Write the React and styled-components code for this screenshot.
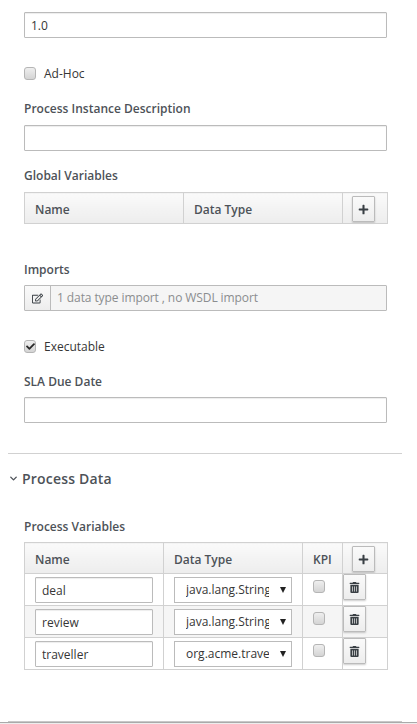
import React from 'react';
import styled, { createGlobalStyle } from 'styled-components';
import { FaPlus, FaTrashAlt, FaRegEdit, FaCheck } from 'react-icons/fa';
import { FiChevronDown } from 'react-icons/fi';

const GlobalStyle = createGlobalStyle`
  html, body {
    margin: 0;
    padding: 0;
    height: 100%;
    overflow: hidden;
    background: #fff;
  }
  body {
    font-family: "Open Sans", "Liberation Sans", sans-serif;
    font-size: 12px;
    color: #363636;
  }
`;

const Page = styled.div`
  height: 724px;
  overflow: hidden;
  display: flex;
  flex-direction: column;
  box-sizing: border-box;
  padding: 0 15px 0 8px;
`;

const Section = styled.div`
  padding: 0 15px 0 16px;
`;

const Label = styled.div`
  font-weight: 600;
  font-size: 12px;
  line-height: 16px;
  margin-top: ${p => p.$top || 0}px;
  margin-bottom: ${p => p.$bottom || 8}px;
  color: #4d5258;
`;

const TextInput = styled.input`
  display: block;
  box-sizing: border-box;
  width: 100%;
  height: 26px;
  border: 1px solid #bbb;
  border-radius: 1px;
  padding: 2px 6px;
  font: 12px "Open Sans", sans-serif;
  color: #363636;
  background: #fff;
  box-shadow: inset 0 1px 1px rgba(3, 3, 3, 0.075);
  outline: none;
`;

const CheckRow = styled.div`
  display: flex;
  align-items: center;
  gap: 8px;
  height: 16px;
  margin-top: ${p => p.$top}px;
`;

const CheckBox = styled.span`
  box-sizing: border-box;
  display: inline-flex;
  align-items: center;
  justify-content: center;
  width: 12px;
  height: 13px;
  border: 1px solid #b5b5b5;
  border-radius: 3px;
  background: linear-gradient(#efefef, #d4d4d4);
  color: #2a2a2a;
  font-size: 9px;
`;

const Table = styled.table`
  width: 363px;
  table-layout: fixed;
  border-collapse: collapse;
  font-size: 12px;
  color: #363636;

  th, td {
    border: 1px solid #d1d1d1;
    padding: 0;
  }

  th {
    height: 31px;
    text-align: left;
    font-weight: 600;
    padding-left: 10px;
    padding-top: 3px;
    box-sizing: border-box;
    background: linear-gradient(#fafafa, #ededed);
    color: #4d5258;
  }
`;

const ButtonHead = styled.th`
  && {
    padding: 0 0 0 9px;
    vertical-align: top;
  }
`;

const IconButton = styled.div`
  box-sizing: border-box;
  width: 23px;
  height: 26px;
  display: flex;
  align-items: center;
  justify-content: center;
  border: 1px solid #bbb;
  border-radius: 1px;
  background: linear-gradient(#fafafa, #ededed);
  box-shadow: 0 1px 2px rgba(0, 0, 0, 0.2);
  color: #393f44;
  font-size: 11px;
  margin-top: ${p => p.$top || 0}px;
`;

const Row = styled.tr`
  background: ${p => (p.$striped ? '#f5f5f5' : '#fff')};
`;

const CellInner = styled.div`
  height: 31px;
  box-sizing: border-box;
  padding: 3px 10px 0;
`;

const CheckCell = styled.div`
  height: 31px;
  box-sizing: border-box;
  padding: 6px 0 0 10px;
`;

const ButtonCell = styled.td`
  && {
    vertical-align: top;
  }
`;

const ButtonCellInner = styled.div`
  height: 31px;
`;

const SelectBox = styled.div`
  box-sizing: border-box;
  position: relative;
  width: 118px;
  height: 26px;
  border: 1px solid #bbb;
  background: #fff;
  padding: 3px 22px 0 11px;
  line-height: 18px;
  overflow: hidden;
  white-space: nowrap;

  &::after {
    content: '';
    position: absolute;
    right: 5px;
    top: 9px;
    border-style: solid;
    border-width: 6px 3px 0;
    border-color: #222 transparent transparent;
  }
`;

const SelectText = styled.div`
  overflow: hidden;
  color: #363636;
`;

const InputGroup = styled.div`
  display: flex;
  box-sizing: border-box;
  height: 26px;
  border: 1px solid #bbb;
  border-radius: 1px;
  background: #f5f5f5;
  color: #8b8d8f;
`;

const GroupAddon = styled.div`
  width: 25px;
  display: flex;
  align-items: center;
  justify-content: center;
  border-right: 1px solid #bbb;
  background: linear-gradient(#fafafa, #ededed);
  color: #393f44;
  font-size: 11px;
`;

const GroupText = styled.div`
  padding-left: 6px;
  line-height: 24px;
  letter-spacing: -0.09px;
`;

const Divider = styled.div`
  height: 1px;
  background: #d1d1d1;
  width: 394px;
  margin-top: 30px;
`;

const SectionTitle = styled.div`
  display: flex;
  align-items: center;
  gap: 3px;
  height: 20px;
  margin-top: 14px;
  font-size: 14px;
  font-weight: 600;
  letter-spacing: 0.2px;
  color: #4d5258;
`;

const BottomLine = styled.div`
  position: fixed;
  left: 0;
  right: 0;
  bottom: 0;
  height: 1px;
  border-top: 1px solid #aaa;
  background: #ededed;

  &::before {
    content: '';
    position: absolute;
    left: 8px;
    width: 394px;
    top: -2px;
    height: 1px;
    background: #c8c8c8;
  }
`;

const variables = [
  { name: 'deal', type: 'java.lang.String' },
  { name: 'review', type: 'java.lang.String', striped: true },
  { name: 'traveller', type: 'org.acme.travels.Traveller' },
];

export default function App() {
  return (
    <>
      <GlobalStyle />
      <Page>
        <Section>
          <Label $top={-12}>Version</Label>
          <TextInput defaultValue="1.0" />
          <CheckRow $top={27}>
            <CheckBox />
            Ad-Hoc
          </CheckRow>
          <Label $top={20}>Process Instance Description</Label>
          <TextInput />
          <Label $top={17}>Global Variables</Label>
          <Table>
            <colgroup>
              <col style={{ width: 159 }} />
              <col style={{ width: 159 }} />
              <col style={{ width: 45 }} />
            </colgroup>
            <thead>
              <tr>
                <th>Name</th>
                <th>Data Type</th>
                <ButtonHead>
                  <IconButton $top={3}><FaPlus /></IconButton>
                </ButtonHead>
              </tr>
            </thead>
          </Table>
          <Label $top={38} $bottom={7}>Imports</Label>
          <InputGroup>
            <GroupAddon><FaRegEdit /></GroupAddon>
            <GroupText>1 data type import , no WSDL import</GroupText>
          </InputGroup>
          <CheckRow $top={27}>
            <CheckBox><FaCheck /></CheckBox>
            Executable
          </CheckRow>
          <Label $top={20} $bottom={7}>SLA Due Date</Label>
          <TextInput />
        </Section>
        <Divider />
        <SectionTitle>
          <FiChevronDown size={11} strokeWidth={3} />
          Process Data
        </SectionTitle>
        <Section>
          <Label $top={31} $bottom={7}>Process Variables</Label>
          <Table>
            <colgroup>
              <col style={{ width: 139 }} />
              <col style={{ width: 139 }} />
              <col style={{ width: 40 }} />
              <col style={{ width: 45 }} />
            </colgroup>
            <thead>
              <tr>
                <th>Name</th>
                <th>Data Type</th>
                <th>KPI</th>
                <ButtonHead>
                  <IconButton $top={3}><FaPlus /></IconButton>
                </ButtonHead>
              </tr>
            </thead>
            <tbody>
              {variables.map(v => (
                <Row key={v.name} $striped={v.striped}>
                  <td>
                    <CellInner>
                      <TextInput defaultValue={v.name} />
                    </CellInner>
                  </td>
                  <td>
                    <CellInner>
                      <SelectBox>
                        <SelectText>{v.type}</SelectText>
                      </SelectBox>
                    </CellInner>
                  </td>
                  <td>
                    <CheckCell><CheckBox /></CheckCell>
                  </td>
                  <ButtonCell>
                    <ButtonCellInner>
                      <IconButton><FaTrashAlt /></IconButton>
                    </ButtonCellInner>
                  </ButtonCell>
                </Row>
              ))}
            </tbody>
          </Table>
        </Section>
        <BottomLine />
      </Page>
    </>
  );
}
